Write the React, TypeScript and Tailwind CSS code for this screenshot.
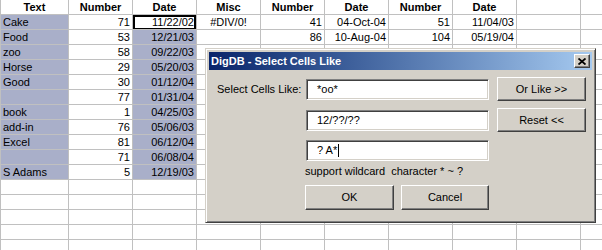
import React from "react";

type Align = "l" | "r" | "c";
const aligns: Align[] = ["l", "r", "r", "c", "r", "r", "r", "r", "l", "l"];

const header = ["Text", "Number", "Date", "Misc", "Number", "Date", "Number", "Date", "", ""];
const data: string[][] = [
  ["Cake", "71", "11/22/02", "#DIV/0!", "41", "04-Oct-04", "51", "11/04/03"],
  ["Food", "53", "12/21/03", "", "86", "10-Aug-04", "104", "05/19/04"],
  ["zoo", "58", "09/22/03"],
  ["Horse", "29", "05/20/03"],
  ["Good", "30", "01/12/04"],
  ["", "77", "01/31/04"],
  ["book", "1", "04/25/03"],
  ["add-in", "76", "05/06/03"],
  ["Excel", "81", "06/12/04"],
  ["", "71", "06/08/04"],
  ["S Adams", "5", "12/19/03"],
  [],
  [],
  [],
  [],
  [],
];

const alignCls: Record<Align, string> = {
  l: "justify-start",
  r: "justify-end",
  c: "justify-center",
};

function Cell({
  text,
  col,
  bold,
  selected,
  active,
}: {
  text: string;
  col: number;
  bold?: boolean;
  selected?: boolean;
  active?: boolean;
}) {
  const width = col === 0 ? "w-[69px] border-l" : "w-[64px]";
  const a: Align = bold ? "c" : aligns[col];
  return (
    <div
      className={`relative flex h-[15px] shrink-0 items-center overflow-hidden whitespace-nowrap border-r border-b border-[#c0c0c0] px-[2px] leading-[14px] ${width} ${alignCls[a]} ${
        selected ? "bg-[#a9afc9]" : "bg-white"
      } ${bold ? "font-bold" : ""}`}
    >
      {active && <div className="absolute left-0 top-0 h-[15px] w-[63px] border-2 border-black" />}
      <span className="relative">{text}</span>
    </div>
  );
}

const raised =
  "border border-t-white border-l-white border-r-[#404040] border-b-[#404040] shadow-[inset_-1px_-1px_0_#808080]";
const sunken =
  "border border-t-[#808080] border-l-[#808080] border-r-white border-b-white shadow-[inset_1px_1px_0_#404040,inset_-1px_-1px_0_#d4d0c8]";

function Input({ value, caret }: { value: string; caret?: boolean }) {
  return (
    <div className={`flex h-[21px] w-[183px] items-center bg-white pl-[10px] ${sunken}`}>
      <span className="whitespace-pre">{value}</span>
      {caret && <span className="ml-[1px] inline-block h-[13px] w-px bg-black" />}
    </div>
  );
}

function Button({ label, w, h }: { label: string; w: string; h: string }) {
  return (
    <div className={`flex items-center justify-center bg-[#d4d0c8] ${w} ${h} ${raised}`}>
      {label}
    </div>
  );
}

export default function App() {
  const rows = [header, ...data];
  return (
    <div
      className="relative h-[250px] w-[602px] overflow-hidden bg-white text-[11px] text-black"
      style={{ fontFamily: '"Liberation Sans", Arial, sans-serif' }}
    >
      <div className="flex flex-col">
        {rows.map((r, ri) => (
          <div key={ri} className="flex">
            {Array.from({ length: 10 }).map((_, ci) => {
              const t = r[ci] ?? "";
              const sel = ri >= 1 && ri <= 11 && (ci === 0 || ci === 2);
              const active = ri === 1 && ci === 2;
              return (
                <Cell
                  key={ci}
                  text={t}
                  col={ci}
                  bold={ri === 0}
                  selected={sel && !active}
                  active={active}
                />
              );
            })}
          </div>
        ))}
      </div>

      {/* Dialog */}
      <div
        className="absolute left-[205px] top-[48px] flex h-[175px] w-[391px] flex-col border border-t-[#d4d0c8] border-l-[#d4d0c8] border-r-[#404040] border-b-[#404040] bg-[#d4d0c8] p-[2px] shadow-[inset_1px_1px_0_#ffffff,inset_-1px_-1px_0_#808080]"
      >
        <div className="mt-[1px] ml-[1px] mr-[1px] flex h-[18px] items-center justify-between bg-linear-to-r from-[#0a246a] to-[#a6caf0] pl-[2px] pr-[2px]">
          <span className="text-[11px] font-bold text-white">DigDB - Select Cells Like</span>
          <div className={`flex h-[14px] w-[16px] items-center justify-center bg-[#d4d0c8] ${raised}`}>
            <svg width="8" height="7" viewBox="0 0 8 7">
              <path d="M0.5 0.5 L7.5 6.5 M7.5 0.5 L0.5 6.5" stroke="#000" strokeWidth="1.8" />
            </svg>
          </div>
        </div>

        <div className="flex flex-col pl-[9px]">
          <div className="mt-[7px] flex h-[24px] items-center">
            <div className="w-[89px]">Select Cells Like:</div>
            <Input value="*oo*" />
            <div className="ml-[8px]">
              <Button label="Or Like >>" w="w-[89px]" h="h-[24px]" />
            </div>
          </div>
          <div className="mt-[7px] flex h-[24px] items-center">
            <div className="w-[89px]" />
            <Input value="12/??/??" />
            <div className="ml-[8px]">
              <Button label="Reset <<" w="w-[89px]" h="h-[24px]" />
            </div>
          </div>
          <div className="mt-[8px] flex h-[21px] items-center">
            <div className="w-[89px]" />
            <Input value="? A*" caret />
          </div>
          <div className="mt-[3px] flex h-[14px] items-center">
            <div className="w-[88px]" />
            <span className="whitespace-pre">support wildcard  character * ~ ?</span>
          </div>
          <div className="mt-[7px] flex items-center">
            <div className="w-[88px]" />
            <Button label="OK" w="w-[89px]" h="h-[25px]" />
            <div className="ml-[7px]">
              <Button label="Cancel" w="w-[88px]" h="h-[25px]" />
            </div>
          </div>
        </div>
      </div>
    </div>
  );
}
